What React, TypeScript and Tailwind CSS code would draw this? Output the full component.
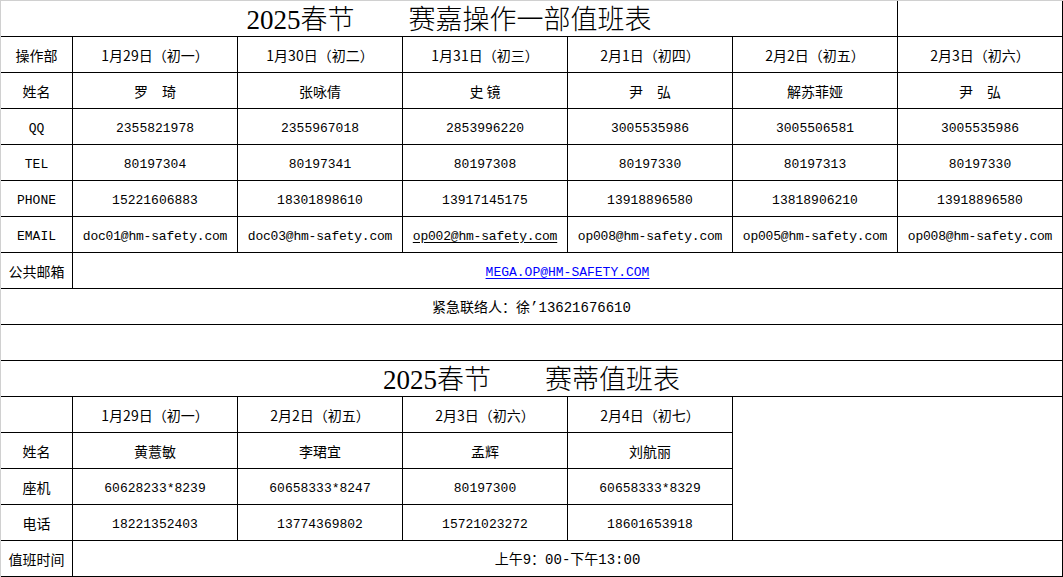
const days = [
  "1月29日（初一）",
  "1月30日（初二）",
  "1月31日（初三）",
  "2月1日（初四）",
  "2月2日（初五）",
  "2月3日（初六）",
];

const rows = [
  { label: "QQ", values: ["2355821978", "2355967018", "2853996220", "3005535986", "3005506581", "3005535986"] },
  { label: "TEL", values: ["80197304", "80197341", "80197308", "80197330", "80197313", "80197330"] },
  { label: "PHONE", values: ["15221606883", "18301898610", "13917145175", "13918896580", "13818906210", "13918896580"] },
];

const emails = [
  "doc01@hm-safety.com",
  "doc03@hm-safety.com",
  "op002@hm-safety.com",
  "op008@hm-safety.com",
  "op005@hm-safety.com",
  "op008@hm-safety.com",
];

const names = ["罗　琦", "张咏倩", "史 镜", "尹　弘", "解苏菲娅", "尹　弘"];

const saidi = [
  { day: "1月29日（初一）", name: "黄薏敏", desk: "60628233*8239", mobile: "18221352403" },
  { day: "2月2日（初五）", name: "李珺宜", desk: "60658333*8247", mobile: "13774369802" },
  { day: "2月3日（初六）", name: "孟辉", desk: "80197300", mobile: "15721023272" },
  { day: "2月4日（初七）", name: "刘航丽", desk: "60658333*8329", mobile: "18601653918" },
];

const cell = "flex items-center justify-center whitespace-nowrap border-r border-b border-black pt-[1px]";
const mono = "font-['Liberation_Mono','Noto_Sans_CJK_SC',monospace] text-[13px] pt-[4px]";
const title =
  "col-span-6 flex items-center justify-center whitespace-pre border-r border-b border-black pt-[3px] font-['Liberation_Serif','Noto_Sans_CJK_SC',serif] text-[27px] font-light leading-none";

export default function App() {
  return (
    <div className="h-[577px] w-[1063px] overflow-hidden bg-white text-black">
      <div className="grid grid-cols-[72px_repeat(6,165px)] auto-rows-[36px] border-l border-t border-[#d0d0d0] font-['Noto_Sans_CJK_SC',sans-serif] text-[14px]">
        {/* 操作一部 */}
        <div className={title}>2025春节　　赛嘉操作一部值班表</div>
        <div className={cell} />

        <div className={cell}>操作部</div>
        {days.map((d, i) => (
          <div key={i} className={cell}>
            {d}
          </div>
        ))}

        <div className={cell}>姓名</div>
        {names.map((n, i) => (
          <div key={i} className={`${cell} whitespace-pre`}>
            {n}
          </div>
        ))}

        {rows.map((r) => (
          <div key={r.label} className="contents">
            <div className={`${cell} ${mono}`}>{r.label}</div>
            {r.values.map((v, i) => (
              <div key={i} className={`${cell} ${mono}`}>
                {v}
              </div>
            ))}
          </div>
        ))}

        <div className={`${cell} ${mono}`}>EMAIL</div>
        {emails.map((e, i) => (
          <div key={i} className={`${cell} ${mono} tracking-[-0.2px]`}>
            <span className={i === 2 ? "underline underline-offset-2" : ""}>{e}</span>
          </div>
        ))}

        <div className={cell}>公共邮箱</div>
        <div className={`${cell} col-span-6 ${mono}`}>
          <span className="text-[#0000ff] underline underline-offset-2">MEGA.OP@HM-SAFETY.COM</span>
        </div>

        <div className={`${cell} col-span-7 pt-[3px] font-['Liberation_Mono','Noto_Sans_CJK_SC',monospace] text-[14px]`}>
          紧急联络人：徐’13621676610
        </div>

        <div className={`${cell} col-span-7`} />

        {/* 赛蒂 */}
        <div className={`${title} col-span-7`}>2025春节　　赛蒂值班表</div>

        <div className={cell} />
        {saidi.map((s) => (
          <div key={s.day} className={cell}>
            {s.day}
          </div>
        ))}
        <div className={`${cell} col-span-2 row-span-4`} />

        <div className={cell}>姓名</div>
        {saidi.map((s) => (
          <div key={s.day} className={cell}>
            {s.name}
          </div>
        ))}

        <div className={cell}>座机</div>
        {saidi.map((s) => (
          <div key={s.day} className={`${cell} ${mono}`}>
            {s.desk}
          </div>
        ))}

        <div className={cell}>电话</div>
        {saidi.map((s) => (
          <div key={s.day} className={`${cell} ${mono}`}>
            {s.mobile}
          </div>
        ))}

        <div className={cell}>值班时间</div>
        <div className={`${cell} col-span-6 pt-[3px] font-['Liberation_Mono','Noto_Sans_CJK_SC',monospace] text-[14px]`}>
          上午9：00-下午13:00
        </div>
      </div>
    </div>
  );
}
